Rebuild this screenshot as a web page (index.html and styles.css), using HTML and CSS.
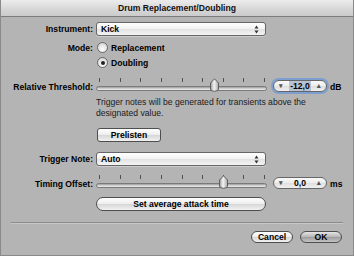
FILE: index.html
```html
<!DOCTYPE html>
<html lang="en">
<head>
  <meta charset="UTF-8" />
  <title>Drum Replacement/Doubling</title>
  <link rel="stylesheet" href="styles.css">
</head>
<body>

<div class="window">
  <div class="titlebar">Drum Replacement/Doubling</div>

  <div class="form">
    <div class="row r-instrument">
      <span class="lbl">Instrument:</span>
      <div class="popup">
        <span>Kick</span>
        <svg class="updown" width="5" height="9" viewBox="0 0 5 9"><path d="M0.5 3.5 L2.5 0.5 L4.5 3.5 Z M0.5 5.5 L2.5 8.5 L4.5 5.5 Z" fill="#333"/></svg>
      </div>
    </div>

    <div class="row r-mode">
      <span class="lbl">Mode:</span>
      <span class="radio"></span>
      <span class="opt">Replacement</span>
    </div>
    <div class="row r-mode2">
      <span class="lbl"></span>
      <span class="radio on"></span>
      <span class="opt">Doubling</span>
    </div>

    <div class="row r-slider r-thresh">
      <span class="lbl">Relative Threshold:</span>
      <div class="slider">
        <div class="ticks"><i></i><i></i><i></i><i></i><i></i><i></i><i></i><i></i><i></i></div>
        <div class="track"></div>
        <svg class="thumb" style="left:113px" width="11" height="14" viewBox="0 0 11 14">
          <defs><linearGradient id="tg1" x1="0" x2="1" y1="0" y2="0"><stop offset="0" stop-color="#9a9a9a"/><stop offset="0.45" stop-color="#f4f4f4"/><stop offset="1" stop-color="#a8a8a8"/></linearGradient></defs>
          <path d="M1.5 5 L5.5 0.8 L9.5 5 V11 Q9.5 13.3 5.5 13.3 Q1.5 13.3 1.5 11 Z" fill="url(#tg1)" stroke="#555" stroke-width="0.9"/>
        </svg>
      </div>
      <div class="field focus">
        <span class="dn">&#9662;</span>
        <span class="val"><span class="sel">-12,0</span></span>
        <span class="up">&#9652;</span>
      </div>
      <span class="unit">dB</span>
    </div>

    <div class="row r-hint">
      <span class="lbl"></span>
      <p class="hint">Trigger notes will be generated for transients above the designated value.</p>
    </div>

    <div class="row r-prelisten">
      <span class="lbl"></span>
      <button class="btn square">Prelisten</button>
    </div>

    <div class="row r-trigger">
      <span class="lbl">Trigger Note:</span>
      <div class="popup">
        <span>Auto</span>
        <svg class="updown" width="5" height="9" viewBox="0 0 5 9"><path d="M0.5 3.5 L2.5 0.5 L4.5 3.5 Z M0.5 5.5 L2.5 8.5 L4.5 5.5 Z" fill="#333"/></svg>
      </div>
    </div>

    <div class="row r-slider r-timing">
      <span class="lbl">Timing Offset:</span>
      <div class="slider">
        <div class="ticks"><i></i><i></i><i></i><i></i><i></i><i></i><i></i><i></i><i></i></div>
        <div class="track"></div>
        <svg class="thumb" style="left:122px" width="11" height="14" viewBox="0 0 11 14">
          <defs><linearGradient id="tg2" x1="0" x2="1" y1="0" y2="0"><stop offset="0" stop-color="#9a9a9a"/><stop offset="0.45" stop-color="#f4f4f4"/><stop offset="1" stop-color="#a8a8a8"/></linearGradient></defs>
          <path d="M1.5 5 L5.5 0.8 L9.5 5 V11 Q9.5 13.3 5.5 13.3 Q1.5 13.3 1.5 11 Z" fill="url(#tg2)" stroke="#555" stroke-width="0.9"/>
        </svg>
      </div>
      <div class="field">
        <span class="dn">&#9662;</span>
        <span class="val">0,0</span>
        <span class="up">&#9652;</span>
      </div>
      <span class="unit">ms</span>
    </div>

    <div class="row r-attack">
      <span class="lbl"></span>
      <button class="btn wide">Set average attack time</button>
    </div>
  </div>

  <div class="sep"></div>

  <div class="actions">
    <button class="btn pill">Cancel</button>
    <button class="btn pill ok">OK</button>
  </div>
</div>

</body>
</html>
```

FILE: styles.css
```css
* {
  box-sizing: border-box;
}
body {
  margin: 0;
  font-family: "Liberation Sans", Arial, sans-serif;
  font-size: 8.6px;
  color: #000;
}
.window {
  width: 354px;
  height: 256px;
  background: #b4b4b4;
  border: 1px solid #8a8a8a;
  border-top: none;
}
.titlebar {
  height: 17px;
  line-height: 16px;
  text-align: center;
  font-weight: bold;
  color: #111;
  background: linear-gradient(#ececec, #d6d6d6 60%, #cbcbcb);
  border-bottom: 1px solid #7c7c7c;
}

/* rows */
.form {
  display: flex;
  flex-direction: column;
}
.row {
  display: flex;
  align-items: center;
}
.lbl {
  width: 92px;
  margin-right: 3px;
  flex: none;
  text-align: right;
  font-weight: bold;
}
.r-instrument { margin-top: 5px; height: 14px; }
.r-mode { margin-top: 6px; height: 11px; }
.r-mode2 { margin-top: 4px; height: 11px; }
.r-thresh { margin-top: 10px; }
.r-hint { margin-top: 4px; align-items: flex-start; }
.r-prelisten { margin-top: 9px; }
.r-trigger { margin-top: 10px; height: 14px; }
.r-timing { margin-top: 9px; }
.r-attack { margin-top: 7px; }

/* popup menu */
.popup {
  width: 170px;
  height: 14px;
  display: flex;
  align-items: center;
  justify-content: space-between;
  padding: 0 6px 0 4px;
  font-weight: bold;
  background: linear-gradient(#ffffff, #f2f2f2 50%, #e2e2e2 51%, #f4f4f4);
  border: 1px solid #666;
  border-radius: 3px;
  box-shadow: 0 1px 0 rgba(255,255,255,0.35);
}

/* radios */
.radio {
  width: 11px;
  height: 11px;
  border-radius: 50%;
  border: 1px solid #6a6a6a;
  background: radial-gradient(circle at 50% 70%, #ffffff, #dcdcdc 70%, #c4c4c4);
  margin: 0 3px 0 1px;
  position: relative;
  flex: none;
}
.radio.on::after {
  content: "";
  position: absolute;
  left: 2.5px;
  top: 2.5px;
  width: 4px;
  height: 4px;
  border-radius: 50%;
  background: #222;
}
.opt {
  font-weight: bold;
}

/* sliders */
.r-slider {
  height: 15px;
  align-items: flex-start;
}
.r-slider .lbl {
  margin-top: 4px;
  line-height: 11px;
}
.slider {
  position: relative;
  width: 171px;
  height: 15px;
  flex: none;
}
.ticks {
  display: flex;
  justify-content: space-between;
  padding: 0 2px 0 3px;
  height: 4px;
}
.ticks i {
  width: 1px;
  height: 4px;
  background: #505050;
}
.track {
  margin-top: 4px;
  height: 5px;
  border-radius: 3px;
  border: 1px solid #7a7a7a;
  background: linear-gradient(#9a9a9a, #d8d8d8 60%, #ececec);
}
.thumb {
  position: absolute;
  top: 0;
}

/* numeric fields */
.field {
  margin: 2px 0 0 6px;
  width: 54px;
  height: 12px;
  display: flex;
  align-items: center;
  justify-content: space-between;
  padding: 0 5px;
  border: 1px solid #666;
  border-radius: 6px;
  background: linear-gradient(#fafafa, #ececec 50%, #dedede 51%, #f0f0f0);
  font-weight: bold;
}
.field.focus {
  box-shadow: 0 0 0 2px #7d9fcf;
}
.field .dn, .field .up {
  color: #555;
  font-size: 7px;
}
.field .val {
  flex: 1;
  text-align: center;
}
.field .sel {
  background: #b7c3d4;
  padding: 0 1px;
}
.unit {
  margin: 4px 0 0 3px;
  line-height: 11px;
  font-weight: bold;
}

/* hint text */
.hint {
  margin: 0;
  width: 240px;
  line-height: 11px;
  color: #1a1a1a;
}

/* buttons */
.btn {
  font-family: "Liberation Sans", Arial, sans-serif;
  font-size: 8.6px;
  font-weight: bold;
  color: #000;
  height: 14px;
  padding: 0;
  border: 1px solid #4e4e4e;
  background: linear-gradient(#ffffff, #ececec 50%, #d6d6d6 51%, #f2f2f2);
}
.btn.square {
  width: 64px;
  margin-left: 1px;
  border-radius: 3px;
}
.btn.wide {
  width: 170px;
  border-radius: 7px;
}
.btn.pill {
  width: 42px;
  height: 12px;
  border-radius: 6px;
}
.btn.ok {
  background: linear-gradient(#e6e6e6, #b4b4b4 50%, #9c9c9c 51%, #c4c4c4);
}

/* bottom */
.sep {
  margin: 11px 10px 0 10px;
  height: 2px;
  border-top: 1px solid #8a8a8a;
  border-bottom: 1px solid #c8c8c8;
}
.actions {
  display: flex;
  justify-content: flex-end;
  gap: 7px;
  margin-top: 7px;
  padding-right: 11px;
}
```
